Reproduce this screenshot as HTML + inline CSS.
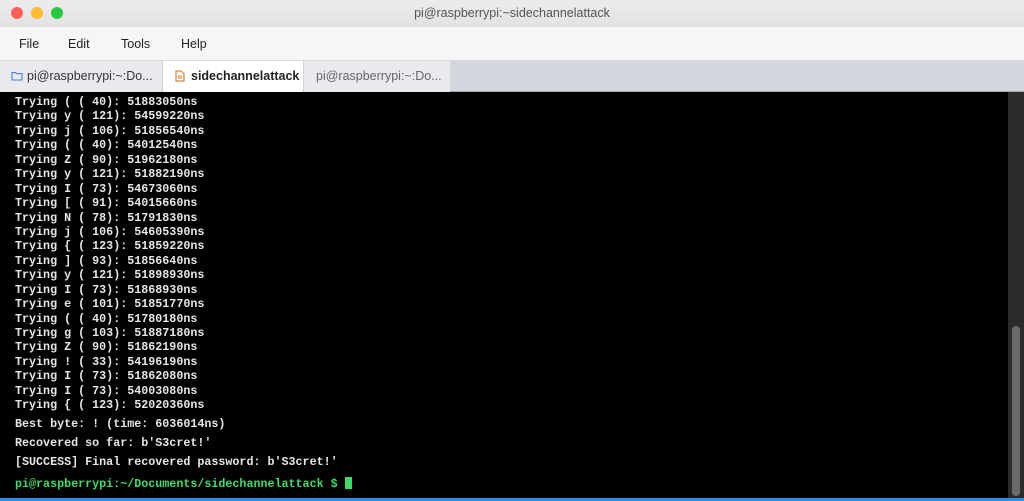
<!DOCTYPE html>
<html><head><meta charset="utf-8"><style>
*{margin:0;padding:0;box-sizing:border-box}
body{width:1024px;height:501px;overflow:hidden;background:#000;font-family:"Liberation Sans",sans-serif;position:relative}
.title{position:absolute;left:0;top:0;width:1024px;height:27px;background:linear-gradient(#ececec,#e2e2e2);text-align:center;font-size:12.5px;color:#555;line-height:26px}
.dot{position:absolute;top:7px;width:12px;height:12px;border-radius:50%}
.menu{position:absolute;top:27px;left:0;width:1024px;height:33px;background:#f6f6f7;font-size:12.5px;color:#222}
.menu span{position:absolute;top:10px}
.tabs{position:absolute;top:60px;left:0;width:1024px;height:32px;background:#d3d7dd;border-top:1px solid #d8d8d8;border-bottom:1px solid #aaa}
.tab{position:absolute;top:0;height:31px;font-size:12.5px;line-height:30px;color:#333}
.term{position:absolute;top:92px;left:0;width:1008px;height:406px;font-family:"Liberation Mono",monospace;font-weight:bold;font-size:11.7px;color:#e6e6e6;line-height:14.43px;padding:0 0 0 15px;white-space:pre}
.sb{position:absolute;left:1008px;top:92px;width:16px;height:406px;background:#2b2b2b}
.thumb{position:absolute;left:1012px;top:326px;width:8px;height:170px;border-radius:4px;background:#6a6a6a}
.blue{position:absolute;left:0;top:498px;width:1024px;height:3px;background:#2f8ee6}
</style></head><body>
<div class="title">pi@raspberrypi:~sidechannelattack
<div class="dot" style="left:11px;background:#fe5f57"></div>
<div class="dot" style="left:31px;background:#febc2e"></div>
<div class="dot" style="left:51px;background:#28c840"></div>
</div>
<div class="menu"><span style="left:19px">File</span><span style="left:68px">Edit</span><span style="left:121px">Tools</span><span style="left:181px">Help</span></div>
<div class="tabs">
<div class="tab" style="left:0;width:162px;background:#e8eaee;padding-left:11px"><svg width="12" height="10" style="vertical-align:-1px;margin-right:4px"><path d="M1 1.5h3.5l1 1.2H11V9H1z" fill="none" stroke="#4a7fe0" stroke-width="1.1"/></svg>pi@raspberrypi:~:Do...</div>
<div class="tab" style="left:163px;width:140px;background:#fff;padding-left:12px;font-weight:bold;color:#222"><svg width="10" height="12" style="vertical-align:-2px;margin-right:6px"><path d="M1 1h5l3 3v7H1z" fill="none" stroke="#e0803a" stroke-width="1.2"/><path d="M3 6h4M3 8h4" stroke="#e0803a" stroke-width="1"/></svg>sidechannelattack</div>
<div class="tab" style="left:304px;width:146px;background:#e8eaee;padding-left:12px;color:#666">pi@raspberrypi:~:Do...</div>
</div>
<div class="term"><div style="margin-top:3px">Trying ( ( 40): 51883050ns
Trying y ( 121): 54599220ns
Trying j ( 106): 51856540ns
Trying ( ( 40): 54012540ns
Trying Z ( 90): 51962180ns
Trying y ( 121): 51882190ns
Trying I ( 73): 54673060ns
Trying [ ( 91): 54015660ns
Trying N ( 78): 51791830ns
Trying j ( 106): 54605390ns
Trying { ( 123): 51859220ns
Trying ] ( 93): 51856640ns
Trying y ( 121): 51898930ns
Trying I ( 73): 51868930ns
Trying e ( 101): 51851770ns
Trying ( ( 40): 51780180ns
Trying g ( 103): 51887180ns
Trying Z ( 90): 51862190ns
Trying ! ( 33): 54196190ns
Trying I ( 73): 51862080ns
Trying I ( 73): 54003080ns
Trying { ( 123): 52020360ns</div><div style="line-height:19.3px;margin-top:2px">Best byte: ! (time: 6036014ns)
Recovered so far: b'S3cret!'
[SUCCESS] Final recovered password: b'S3cret!'</div><div style="margin-top:4px;color:#3ddc6a">pi@raspberrypi:~/Documents/sidechannelattack $ <span style="display:inline-block;width:7px;height:12px;background:#3ddc6a;vertical-align:-2px"></span></div></div>
<div class="sb"></div><div class="thumb"></div>
<div class="blue"></div>
</body></html>
